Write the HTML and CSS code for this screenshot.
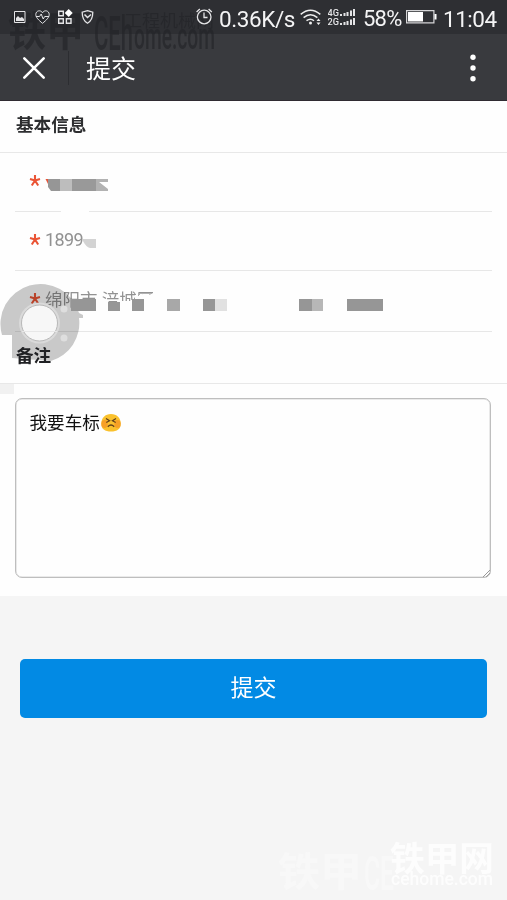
FILE: index.html
```html
<!DOCTYPE html>
<html lang="zh-CN">
<head>
<meta charset="utf-8">
<title>提交</title>
<link rel="stylesheet" href="styles.css">
</head>
<body>
<div class="screen">
  <header class="top">
    <svg class="mark mark-top" width="220" height="60" viewBox="0 0 220 60">
      <g fill="#232428">
        <text x="8" y="46" font-size="41" font-weight="700" textLength="76" lengthAdjust="spacingAndGlyphs">铁甲</text>
        <text x="94" y="50" font-size="49" font-weight="500" textLength="39" lengthAdjust="spacingAndGlyphs">CEh</text>
        <text x="134" y="49" font-size="36" font-weight="500" textLength="81" lengthAdjust="spacingAndGlyphs">ome.com</text>
        <text x="124" y="27" font-size="17.5" textLength="90" lengthAdjust="spacingAndGlyphs">工程机械网</text>
      </g>
    </svg>
    <div class="status">
      <svg class="notices" width="82" height="18" viewBox="13 8 82 18" fill="none" stroke="#e4e4e6">
        <path d="M14.500 11.500h10.500v11h-10.500z"/><path fill="#e4e4e6" stroke="none" d="M16 21v-3l2-2 2 2 2-1 2 2v2z"/>
        <path d="M42.500 23.300C38.500 20 35.800 17.500 35.800 14.500c0-4 5-5 6.700-1.700 1.700-3.300 6.700-2.300 6.700 1.700 0 3-2.700 5.500-6.700 8.800z"/><path d="M36 16.500h3.500l1.700-2.500 2 5 1.500-2.500H49"/>
        <path stroke-width="1.400" d="M58.700 11.200h4.600v4.600h-4.600zM58.700 18.700h4.600v4.600h-4.600zM66.400 18.700H71v4.600h-4.600z"/><path fill="#fff" stroke="none" d="M68.700 9l4 4-4 4-4-4z"/>
        <path stroke-width="1.300" d="M87.500 10.700l5.300 1.500c0 5.500-1.800 9-5.300 11-3.500-2-5.300-5.500-5.300-11z"/><path stroke-width="1.500" d="M84.500 14.500l3 3 3.500-3"/>
      </svg>
      <svg class="alarm" width="18" height="18" viewBox="195 7 18 18" fill="none" stroke="#e4e4e6" stroke-width="1.300"><circle cx="204.200" cy="17" r="6.800"/><path d="M204 12.500v5h3.500M196.600 12l3.200-3M208.600 9l3.200 3"/></svg>
      <span class="speed">0.36K/s</span>
      <svg class="wifi" width="22" height="18" viewBox="300 8 22 18" fill="none" stroke="#eee" stroke-width="1.500"><path d="M300.700 14.300q9.800-8.200 19.600 0M303.600 17.600q6.900-5.800 13.800 0M306.500 20.700q4-3 7.500 0"/><circle cx="310.500" cy="23" r="1.500" fill="#eee" stroke="none"/><path fill="#eee" stroke="none" d="M316.500 21l2-2.500 2 2.500zM316.500 22.500h4l-2 2.500z"/></svg>
      <svg class="signal" width="28" height="18" viewBox="328 8 28 18" fill="#e4e4e6"><text x="327.500" y="16" font-size="9" font-weight="500" textLength="11.500" lengthAdjust="spacingAndGlyphs">4G</text><text x="327.500" y="25" font-size="9" font-weight="500" textLength="11.500" lengthAdjust="spacingAndGlyphs">2G</text><path d="M340 14h2v2h-2zM343.500 13h2v3h-2zM346.500 12h2v4h-2zM350 10.500h2V16h-2zM353 9h2v7h-2zM340 23h2v2h-2zM343.500 22h2v3h-2zM346.500 21h2v4h-2zM350 19.500h2V25h-2zM353 18h2v7h-2z"/></svg>
      <span class="percent">58%</span>
      <svg class="battery" width="31" height="14" viewBox="406 10 31 14"><path fill="none" stroke="#d5d5d7" stroke-width="1.200" d="M406.600 10.600h27.300v12.200h-27.300z"/><path fill="#fff" d="M408 12h15v9.500h-15zM434.500 14h2v5.500h-2z"/></svg>
      <span class="clock">11:04</span>
    </div>
    <div class="nav">
      <svg class="close" width="24" height="24" viewBox="0 0 24 24" stroke="#fff" stroke-width="2.600" stroke-linecap="round"><path d="M2.300 2.300l19.400 19.400M21.700 2.300L2.300 21.700"/></svg>
      <i class="divider"></i>
      <h1>提交</h1>
      <svg class="more" width="6" height="28" viewBox="0 0 6 28" fill="#fff"><circle cx="3" cy="3.200" r="2.700"/><circle cx="3" cy="14" r="2.700"/><circle cx="3" cy="24.800" r="2.700"/></svg>
    </div>
  </header>
  <main>
    <h2>基本信息</h2>
    <div class="fields">
      <div class="field"><svg class="star" width="12" height="13" viewBox="0 0 12 13"><path d="M6 6.500V1M6 6.500L1 5M6 6.500L11 5M6 6.500L2.800 11.500M6 6.500L9.200 11.500"/></svg></div>
      <div class="field"><svg class="star" width="12" height="13" viewBox="0 0 12 13"><path d="M6 6.500V1M6 6.500L1 5M6 6.500L11 5M6 6.500L2.800 11.500M6 6.500L9.200 11.500"/></svg><span class="phone">1899</span></div>
      <div class="field"><svg class="star" width="12" height="13" viewBox="0 0 12 13"><path d="M6 6.500V1M6 6.500L1 5M6 6.500L11 5M6 6.500L2.800 11.500M6 6.500L9.200 11.500"/></svg><span class="city">绵阳市 涪城区</span></div>
    </div>
    <h2 class="remark">备注</h2>
    <div class="note"><div class="textarea"><span>我要车标</span><svg class="emoji" width="20" height="18" viewBox="0 0 20 18"><path fill="#fac12d" d="M10 0c6 0 9.500 4 9.800 9.500.2 5.500-3.800 8-9.800 8S0 15 .2 9.500C.5 4 4 0 10 0z"/><ellipse cx="3.500" cy="10" rx="3.200" ry="4" fill="#f58b22" opacity=".6"/><ellipse cx="16.500" cy="10" rx="3.200" ry="4" fill="#f58b22" opacity=".6"/><path d="M5 4.500l3.500 2.300L5.300 8.500M15 4.500l-3.500 2.300 3.200 1.700M6.800 12.700q3.200-3.400 6.400 0" fill="none" stroke="#63401c" stroke-width="1.300"/></svg>
      <svg class="grip" width="8" height="8" viewBox="0 0 8 8"><path d="M1 8l7-7M4 8l4-4" stroke="#999"/></svg></div></div>
    <svg class="cover" width="507" height="300" viewBox="0 101 507 300">
      <path fill="#e8553a" d="M45.500 179h3v6z"/>
      <path fill="#969696" d="M48 179h12v12h-9l-3-4z"/><path fill="#bdbdbd" d="M60 179h12v12H60z"/><path fill="#999" d="M72 179h24v12H72z"/><path fill="#b2b2b2" d="M96 179h12v3h-9l9 7v2H96z"/>
      <path fill="#fefefe" d="M61 209h28v5H61z"/>
      <path fill="#d3d3d3" d="M83 239h13v9h-6q-4-1-7-7z"/>
      <path fill="#fefefe" d="M71 304h26v7H71zM97 300h11v11H97zM108 302h13v9h-13zM121 301h10v10h-10zM131 300h5v11h-5zM135 295h19v18h-19z"/>
    </svg>
    <svg class="bubble" width="90" height="90" viewBox="0 280 90 90">
      <path fill="#cacaca" d="M2 335A39.500 39.500 0 1 1 79 313l4 2v3h-4A39.500 39.500 0 0 1 51 361L12 358V335z"/>
    </svg>
    <svg class="cover" width="507" height="300" viewBox="0 101 507 300">
      <g fill="#dedede"><circle cx="64" cy="309" r="3.500"/><circle cx="64" cy="338" r="3.500"/></g>
      <circle cx="39.500" cy="323" r="20.500" fill="#dadada"/><circle cx="39.500" cy="323" r="18" fill="#f7f7f7" stroke="#b8b8b8"/>
      <path d="M22 331.500h35" stroke="#e7e7e7"/>
      <path fill="#969696" d="M71 299h25v12H71zM108 302h12v9h-12zM132 299h12v12h-12zM203 299h12v12h-12zM299 299h13v12h-13zM347 299h36v12h-36z"/><path fill="#a8a8a8" d="M167 299h13v12h-13z"/><path fill="#e1e1e1" d="M215 299h12v12h-12z"/><path fill="#b7b7b7" d="M312 299h11v12h-11z"/>
      <path d="M138 293.500h14M138.500 293v3" stroke="#b2b2b2"/>
      <path fill="#f1f1f1" d="M0 383h14v11H0z"/>
    </svg>
  </main>
  <div class="actions"><button>提交</button></div>
  <svg class="mark mark-bottom" width="237" height="60" viewBox="270 840 237 60">
    <g fill="#f8f8f8" font-weight="700"><text x="278" y="886" font-size="40" textLength="84" lengthAdjust="spacingAndGlyphs">铁甲</text><text x="364" y="890" font-size="48" font-weight="500" textLength="30" lengthAdjust="spacingAndGlyphs">CE</text></g>
    <g fill="#fdfdfd"><text x="390" y="871" font-size="34" font-weight="700" textLength="104" lengthAdjust="spacingAndGlyphs">铁甲网</text><text x="391" y="885" font-size="18" font-weight="500" textLength="102" lengthAdjust="spacingAndGlyphs">cehome.com</text></g>
  </svg>
</div>
</body>
</html>
```
FILE: styles.css
```css
* { box-sizing: border-box; }
body { margin: 0; font-family: Roboto, "Noto Sans CJK SC", sans-serif; }
.screen { position: relative; width: 507px; height: 900px; overflow: hidden; background: #f5f5f5; }
.top { position: relative; height: 101px; background: #393a3e; border-bottom: 1px solid #302b32; }
.mark { position: absolute; pointer-events: none; overflow: visible; }
.mark-top { left: 0; top: 0; z-index: 0; opacity: .65; }
.mark-bottom { right: 0; bottom: 0; }
.status { height: 34px; display: flex; align-items: center; padding-left: 13px; background: #2e2f33; color: #f4f4f5; font-size: 22.5px; line-height: 34px; white-space: nowrap; }
.status > *, .nav > * { position: relative; z-index: 1; flex: none; }
.alarm { margin-left: 100px; margin-top: -2px; }
.speed { width: 76px; margin-left: 6px; padding-top: 3px; letter-spacing: -.4px; }
.wifi { margin-left: 5px; }
.signal { margin-left: 6px; }
.percent { width: 40px; margin-left: 7px; padding-top: 3px; font-size: 22px; letter-spacing: -.8px; }
.battery { margin-left: 3px; }
.clock { margin-left: 6px; padding-top: 3px; font-size: 22.5px; letter-spacing: -.5px; }
.nav { height: 66px; display: flex; align-items: center; padding: 2px 31px 0 22px; }
.divider { width: 1px; height: 34px; margin-left: 22px; background: #2c2d31; }
h1 { margin: 0 auto 0 17px; padding-top: 3px; color: #fff; font-size: 25px; line-height: 36px; font-weight: 400; }
main { position: relative; height: 495px; background: #fefefe; }
h2 { height: 52px; margin: 0; padding-left: 16px; border-bottom: 1px solid #e8e8e8; color: #2d2e30; font-size: 17.6px; line-height: 49px; font-weight: 700; }
.fields { padding: 0 15px; }
.field { height: 59px; display: flex; align-items: center; padding: 0 0 3px 14px; border-bottom: 1px solid #e7e7e7; color: #929292; }
.field:last-child { height: 61px; padding-bottom: 5px; }
.star { flex: none; fill: none; stroke: #ea5435; stroke-width: 2.1; }
.phone { margin-left: 4px; font-size: 18px; letter-spacing: -.6px; }
.city { margin-left: 4px; font-size: 17.5px; white-space: nowrap; }
.remark { position: relative; z-index: 2; padding-left: 16px; color: #202124; }
.note { padding: 14px 16px 0 15px; }
.textarea { position: relative; height: 180px; display: flex; align-items: flex-start; padding: 11px 13.5px; border: 1.5px solid #bebebe; border-width: 1px; box-shadow: inset 0 0 0 .5px #d5d5d5; border-radius: 7px; color: #111; font-size: 17.6px; line-height: 26px; }
.emoji { margin: 4px 0 0 1px; }
.grip { position: absolute; right: 0; bottom: 0; }
.cover { position: absolute; left: 0; top: 0; z-index: 1; }
.bubble { position: absolute; left: 0; top: 179px; z-index: 1; mix-blend-mode: multiply; }
.actions { padding: 63px 20px 0; }
button { display: block; width: 467px; height: 59px; padding: 0; border: 0; border-radius: 5px; background: #028ae4; color: #fff; font: 400 23px/59px Roboto, "Noto Sans CJK SC", sans-serif; }
```
